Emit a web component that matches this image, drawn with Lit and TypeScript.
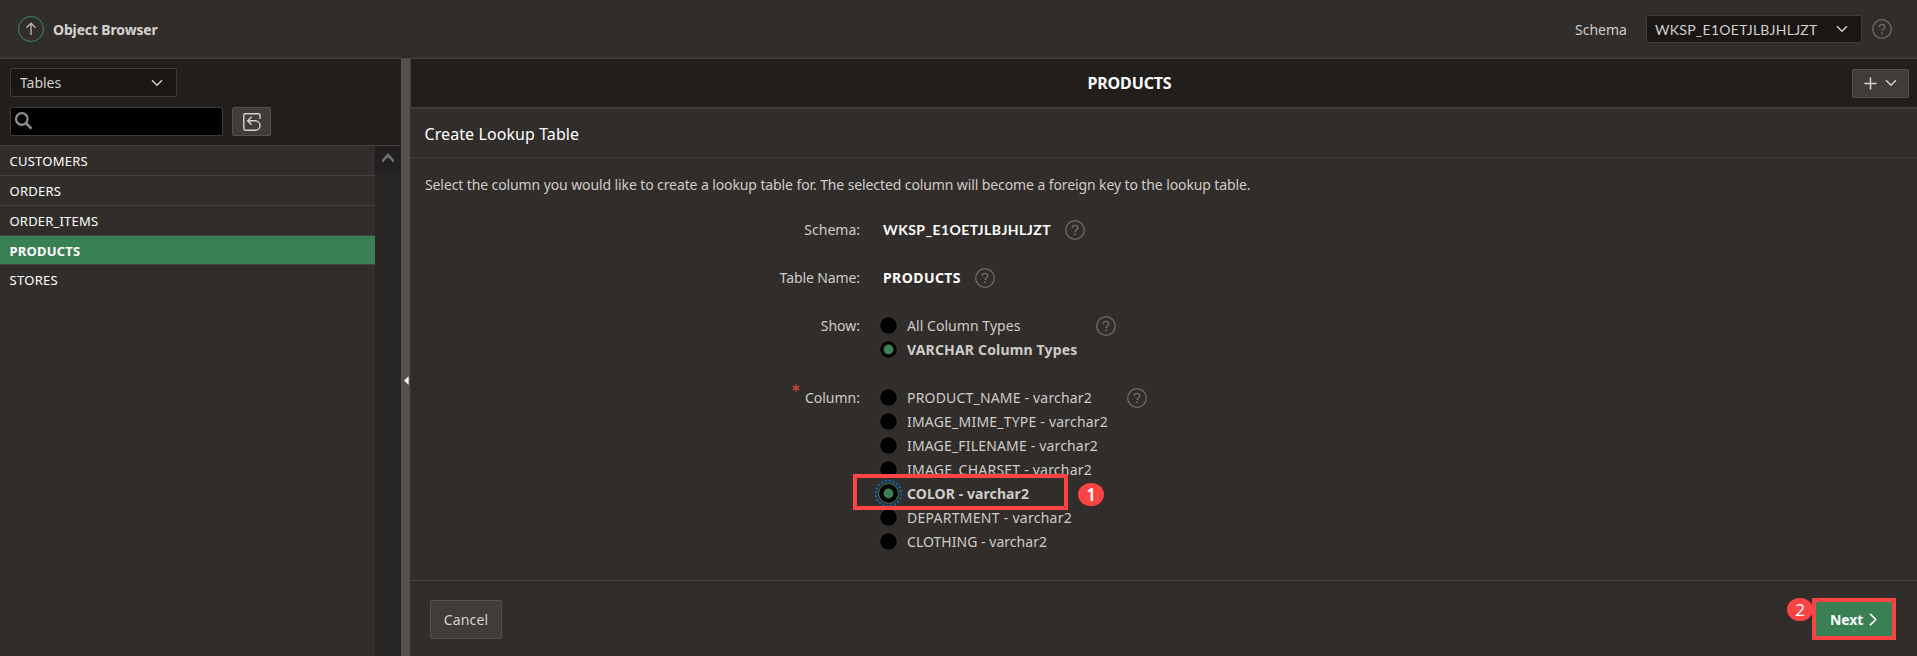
import { LitElement, html, css, svg, nothing } from "lit";
import { customElement, property, state } from "lit/decorators.js";
import { classMap } from "lit/directives/class-map.js";

interface Label {
  text: string;
  tracking: number;
}
interface Option extends Label {
  checked?: boolean;
  focused?: boolean;
}

const TABLES: Label[] = [
  { text: "CUSTOMERS", tracking: 0.25 },
  { text: "ORDERS", tracking: 0.25 },
  { text: "ORDER_ITEMS", tracking: 0.2 },
  { text: "PRODUCTS", tracking: 0.2 },
  { text: "STORES", tracking: 0.3 },
];

const SHOW: Option[] = [
  { text: "All Column Types", tracking: 0.05 },
  { text: "VARCHAR Column Types", tracking: 0.17, checked: true },
];

const COLUMNS: Option[] = [
  { text: "PRODUCT_NAME - varchar2", tracking: 0.185 },
  { text: "IMAGE_MIME_TYPE - varchar2", tracking: 0.205 },
  { text: "IMAGE_FILENAME - varchar2", tracking: 0.17 },
  { text: "IMAGE_CHARSET - varchar2", tracking: 0.22 },
  { text: "COLOR - varchar2", tracking: 0.083, checked: true, focused: true },
  { text: "DEPARTMENT - varchar2", tracking: 0.267 },
  { text: "CLOTHING - varchar2", tracking: 0.03 },
];

const label = (l: Label) =>
  html`<span style="letter-spacing:${l.tracking}px">${l.text}</span>`;

const chevronDown = html`<svg class="chev" width="12" height="8" viewBox="0 0 12 8">
  <path d="M1 1.2 6 6.3 11 1.2" fill="none" stroke="currentColor" stroke-width="1.4" />
</svg>`;

@customElement("help-icon")
class HelpIcon extends LitElement {
  static styles = css`
    :host { display: block; width: 20px; height: 20px; color: #6f6a66; }
    svg { display: block; }
  `;
  render() {
    return html`<svg width="20" height="20" viewBox="0 0 20 20" fill="none" stroke="currentColor">
      <circle cx="10" cy="10" r="9.3" stroke-width="1.3" />
      <path d="M7.3 8.1C7.3 6.4 8.4 5.4 10 5.4s2.7 1 2.7 2.5c0 1.3-.8 1.9-1.6 2.4-.8.5-1.1.9-1.1 1.8" stroke-width="1.4" />
      <circle cx="10" cy="14.3" r=".95" fill="currentColor" stroke="none" />
    </svg>`;
  }
}

@customElement("radio-dot")
class RadioDot extends LitElement {
  @property({ type: Boolean }) checked = false;
  @property({ type: Boolean }) focused = false;
  static styles = css`
    :host { display: block; width: 19px; height: 19px; }
    svg { display: block; overflow: visible; }
  `;
  render() {
    return html`<svg width="19" height="19" viewBox="0 0 19 19">
      <circle cx="9.5" cy="9.5" r=${this.focused ? 9.9 : 8.9} fill="#000"
        stroke=${this.focused ? "#3d8257" : "#403c38"} stroke-width="1" />
      ${this.focused
        ? svg`<circle cx="9.5" cy="9.5" r="12.8" fill="none" stroke="#0a6fc9" stroke-width="2" stroke-dasharray="2 2.02" />`
        : nothing}
      ${this.checked
        ? svg`<circle cx="9.5" cy="9.5" r="4.9" fill="#3a8055" />`
        : nothing}
    </svg>`;
  }
}

@customElement("app-root")
class AppRoot extends LitElement {
  @state() private selected = "PRODUCTS";

  static styles = css`
    :host {
      display: flex; flex-direction: column; height: 656px; overflow: hidden;
      background: #312d2a; color: #cfccc9;
      font: 14px/24px "Noto Sans", sans-serif;
    }
    * { box-sizing: border-box; }
    svg { display: block; flex: none; }
    .top {
      height: 59px; flex: none; display: flex; align-items: center;
      padding: 0 25px 0 18px; border-bottom: 1px solid #45413d;
    }
    .top h1 { margin: 2px 0 0 9px; font-size: 14px; font-weight: 700; letter-spacing: -0.15px; color: #d6d3d0; }
    .top .name { margin: 2px 19px 0 auto; letter-spacing: 0.02px; }
    .select {
      display: flex; align-items: center; justify-content: space-between;
      background: #191614; border: 1px solid #3f3b38; border-radius: 2px; color: #d3d0cd;
    }
    .schema {
      width: 216px; height: 28px; padding: 2px 13px 0 8px; margin-right: 10px;
      font-family: Lato, "Noto Sans", sans-serif; letter-spacing: 0.27px;
    }
    .schema .chev { margin-top: -2px; }
    .main { flex: 1; display: flex; min-height: 0; }
    .side { width: 401px; display: flex; flex-direction: column; flex: none; }
    .tools {
      height: 87px; background: #221e1b; border-bottom: 1px solid #45413d;
      padding: 9px 10px; display: flex; flex-direction: column; gap: 10px;
    }
    .kind { width: 167px; height: 29px; padding: 1px 13px 0 9px; letter-spacing: -0.05px; }
    .find { display: flex; gap: 9px; }
    .search { width: 213px; height: 29px; background: #000; border: 1px solid #3f3b38; border-radius: 2px; padding: 3px 0 0 3px; }
    .btn {
      display: flex; align-items: center; justify-content: center;
      background: #403c38; border: 1px solid #55504b; border-radius: 2px; color: #d6d3d0;
    }
    .reset { width: 39px; height: 29px; }
    .browse { flex: 1; display: flex; }
    .list { flex: 1; margin: 0; padding: 0; list-style: none; font-size: 13px; color: #fff; }
    .list li { height: 30px; line-height: 30px; padding-left: 9.5px; border-bottom: 1px solid #45413d; }
    .list li:last-child { border-bottom: 0; line-height: 31px; }
    .list .on { height: 29px; background: #3a8055; font-weight: 700; line-height: 30px; }
    .bar { width: 26px; background: #262523; }
    .bar div { height: 26px; background: #221f20; display: flex; align-items: center; justify-content: center; padding-bottom: 2px; }
    .split { width: 9px; flex: none; background: #56504a; display: flex; align-items: center; padding: 45px 0 0 3px; }
    .pane { flex: 1; display: flex; flex-direction: column; min-width: 0; }
    .head {
      height: 50px; flex: none; background: #221e1b; border-left: 1px solid #403c38;
      border-bottom: 2px solid #403c38; display: flex; align-items: center; padding: 0 8px 0 0;
    }
    .head h2 { flex: 1; margin: 0; text-align: center; font-size: 16px; color: #fff; letter-spacing: -0.15px; padding-right: 4px; }
    .add { width: 57px; height: 29px; gap: 8px; }
    .title { height: 49px; flex: none; border-bottom: 1px solid #3f3b37; padding: 0 14.5px; font-size: 16px; line-height: 50px; color: #fff; letter-spacing: 0.08px; }
    .body { flex: 1; padding: 15px; }
    .intro { margin: 0 0 21px; letter-spacing: -0.105px; }
    .form { display: grid; grid-template-columns: 435px auto; column-gap: 19px; row-gap: 24px; justify-content: start; }
    .lab { text-align: right; }
    .lab.tight { letter-spacing: -0.1px; }
    .req { position: relative; }
    .req svg { position: absolute; left: 367px; top: -2px; }
    .val { display: flex; align-items: flex-start; padding-left: 4px; color: #fff; font-weight: 700; }
    .val.id { font-family: Lato, "Noto Sans", sans-serif; }
    .val help-icon, .group help-icon { margin-top: 2px; }
    .val help-icon { margin-left: 14px; }
    .group { display: flex; align-items: flex-start; }
    .opt { display: flex; align-items: center; height: 24px; gap: 9px; position: relative; white-space: nowrap; }
    .opt radio-dot { margin-bottom: 1px; }
    .opt.checked { font-weight: 700; }
    .opts.show { width: 217px; }
    .opts.cols { width: 248px; }
    .mark { position: absolute; border: 4px solid #fd4343; z-index: 1; }
    .mark.color { left: -26px; top: -8px; width: 215px; height: 36px; }
    .mark.next { left: -4px; top: -4px; width: 84px; height: 42px; }
    .num {
      position: absolute; width: 26px; height: 23px; border-radius: 50%; background: #fd4343;
      color: #fff; text-align: center; font-weight: 400; font-size: 17px; line-height: 23px;
    }
    .num.one { left: 199px; top: 1px; font-weight: 600; }
    .num.two { left: -29px; top: -4px; z-index: 0; }
    .foot {
      height: 76px; flex: none; border-top: 1px solid #45413d; padding: 19px 25px 0 20px;
      display: flex; justify-content: space-between; align-items: flex-start;
    }
    .cancel { width: 72px; height: 39px; letter-spacing: 0.15px; padding-top: 1px; }
    .go {
      position: relative; width: 76px; height: 34px; margin-top: 2px; background: #3a8055;
      color: #fff; font-weight: 700; display: flex; align-items: center; padding: 2px 0 0 14px; gap: 6px;
      letter-spacing: -0.1px;
    }
    .go svg { margin-top: -2px; }
  `;

  private options(list: Option[], kind: string) {
    return html`<div class="opts ${kind}">
      ${list.map(
        (o) => html`<div class=${classMap({ opt: true, checked: !!o.checked })}>
          <radio-dot ?checked=${o.checked} ?focused=${o.focused}></radio-dot>
          ${label(o)}
          ${o.focused
            ? html`<div class="mark color"></div><div class="num one">1</div>`
            : nothing}
        </div>`
      )}
    </div>`;
  }

  render() {
    return html`
      <header class="top">
        <svg width="26" height="26" viewBox="0 0 26 26" fill="none">
          <circle cx="13" cy="13" r="12.5" stroke="#3d8c60" />
          <path d="M13 19V7.4M8.4 11.8 13 7.2l4.6 4.6" stroke="#b5b1ae" stroke-width="1.4" />
        </svg>
        <h1>Object Browser</h1>
        <span class="name">Schema</span>
        <div class="select schema"><span>WKSP_E1OETJLBJHLJZT</span>${chevronDown}</div>
        <help-icon></help-icon>
      </header>
      <div class="main">
        <aside class="side">
          <div class="tools">
            <div class="select kind"><span>Tables</span>${chevronDown}</div>
            <div class="find">
              <div class="search">
                <svg width="20" height="20" viewBox="0 0 20 20" fill="none" stroke="#918d8a">
                  <circle cx="7.8" cy="8" r="5.8" stroke-width="2.2" />
                  <path d="M12 12.2 17.4 17.6" stroke-width="2.6" />
                </svg>
              </div>
              <div class="btn reset">
                <svg width="18" height="18" viewBox="0 0 18 18" fill="none" stroke="currentColor" stroke-width="1.4">
                  <path d="M17 5.8V2.2Q17 .8 15.6 .8H2.2Q.8 .8 .8 2.2V15.8Q.8 17.2 2.2 17.2H12.3A4.7 4.7 0 0 0 12.3 7.8H4.6M8.6 3.8 4.6 7.8l4 4" />
                </svg>
              </div>
            </div>
          </div>
          <div class="browse">
            <ul class="list">
              ${TABLES.map(
                (t) => html`<li class=${classMap({ on: t.text === this.selected })}
                  @click=${() => (this.selected = t.text)}>${label(t)}</li>`
              )}
            </ul>
            <div class="bar">
              <div>
                <svg width="14" height="12" viewBox="0 0 14 12"><path d="M1 7.7 7 1l6 6.7v3.4L7 5.2 1 11.1Z" fill="#716e6c" /></svg>
              </div>
            </div>
          </div>
        </aside>
        <div class="split">
          <svg width="5" height="9" viewBox="0 0 5 9"><path d="M4.6 .2v8.6L.2 4.5Z" fill="#fff" /></svg>
        </div>
        <section class="pane">
          <div class="head">
            <h2>PRODUCTS</h2>
            <div class="btn add">
              <svg width="13" height="13" viewBox="0 0 13 13"><path d="M6.5 .4v12.2M.4 6.5h12.2" stroke="currentColor" stroke-width="1.5" /></svg>
              ${chevronDown}
            </div>
          </div>
          <div class="title">Create Lookup Table</div>
          <div class="body">
            <p class="intro">Select the column you would like to create a lookup table for. The selected column will become a foreign key to the lookup table.</p>
            <div class="form">
              <div class="lab">Schema:</div>
              <div class="val id">
                ${label({ text: "WKSP_E1OETJLBJHLJZT", tracking: 0.44 })}
                <help-icon></help-icon>
              </div>
              <div class="lab tight">Table Name:</div>
              <div class="val">
                ${label({ text: "PRODUCTS", tracking: 0.43 })}
                <help-icon></help-icon>
              </div>
              <div class="lab">Show:</div>
              <div class="group">${this.options(SHOW, "show")}<help-icon></help-icon></div>
              <div class="lab req">
                <svg width="8" height="8" viewBox="0 0 8 8"><path d="M4 .4v7.2M.8 2.2l6.4 3.6M7.2 2.2.8 5.8" stroke="#d2442f" stroke-width="1.4" /></svg>
                Column:
              </div>
              <div class="group">${this.options(COLUMNS, "cols")}<help-icon></help-icon></div>
            </div>
          </div>
          <footer class="foot">
            <div class="btn cancel">Cancel</div>
            <div class="go">
              <div class="num two">2</div>
              <div class="mark next"></div>
              <span>Next</span>
              <svg width="8" height="13" viewBox="0 0 8 13"><path d="M1 .9 6.8 6.5 1 12.1" fill="none" stroke="currentColor" stroke-width="1.5" /></svg>
            </div>
          </footer>
        </section>
      </div>
    `;
  }
}
